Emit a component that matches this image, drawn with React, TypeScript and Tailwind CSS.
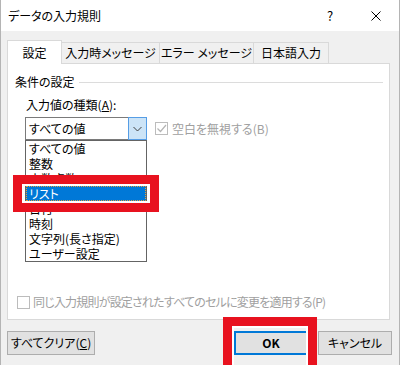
import React from 'react';

const listItems = [
  'すべての値',
  '整数',
  '小数点数',
  'リスト',
  '日付',
  '時刻',
  '文字列(長さ指定)',
  'ユーザー設定',
];

function Check({ checked }: { checked?: boolean }) {
  return (
    <span className="flex h-[13px] w-[13px] shrink-0 items-center justify-center border border-[#bcbcbc] bg-white">
      {checked && (
        <svg width="11" height="11" viewBox="0 0 11 11">
          <path d="M1.5 5.5l3 3 5.5-6.5" stroke="#b4b4b4" strokeWidth="1.2" fill="none" />
        </svg>
      )}
    </span>
  );
}

export default function App() {
  return (
    <div className="relative h-[365px] w-[400px] overflow-hidden border-x border-[#b4b4b4] bg-[#f0f0f0] font-['Noto_Sans_CJK_JP',sans-serif] text-[12px] leading-[14px] text-black [font-feature-settings:'palt']">
      {/* title bar */}
      <div className="flex h-[31px] items-center bg-white pl-[7px]">
        <span className="text-[12px]">データの入力規則</span>
        <div className="ml-auto flex h-full">
          <div className="flex w-[46px] items-center justify-center text-[13px]">?</div>
          <div className="flex w-[46px] items-center justify-center">
            <svg width="10" height="10" viewBox="0 0 10 10">
              <path d="M0.5 0.5l9 9M9.5 0.5l-9 9" stroke="#000" strokeWidth="1" fill="none" />
            </svg>
          </div>
        </div>
      </div>

      {/* tabs */}
      <div className="ml-[6px] mt-[9px] flex h-[23px] items-end">
        <div className="relative z-10 -mb-px flex h-[24px] w-[55px] items-center justify-center border-x border-t border-[#d9d9d9] bg-white">
          設定
        </div>
        <div className="flex h-[21px] w-[98px] items-center justify-center border-r border-t border-[#d9d9d9]">
          入力時メッセージ
        </div>
        <div className="flex h-[21px] w-[94px] items-center justify-center border-r border-t border-[#d9d9d9]">
          エラー メッセージ
        </div>
        <div className="flex h-[21px] w-[75px] items-center justify-center border-r border-t border-[#d9d9d9]">
          日本語入力
        </div>
      </div>

      {/* panel */}
      <div className="ml-[6px] flex h-[257px] w-[383px] flex-col border border-[#d9d9d9] bg-white">
        <div className="mt-[11px] flex h-[14px] items-center pl-[7px] pr-[6px]">
          <span>条件の設定</span>
          <div className="ml-[4px] h-px flex-1 bg-[#dcdcdc]" />
        </div>
        <div className="mt-[9px] pl-[18px]">
          入力値の種類(<span className="underline">A</span>):
        </div>
        <div className="mt-[5px] flex items-center gap-[8px] pl-[17px]">
          <div className="relative z-10 flex h-[23px] w-[122px] items-center border border-[#7a7a7a] bg-white">
            <span className="pl-[3px]">すべての値</span>
            <div className="absolute -right-px -top-px flex h-[23px] w-[19px] items-center justify-center border border-[#569de5] bg-[#cce4f7]">
              <svg width="9" height="6" viewBox="0 0 9 6">
                <path d="M0.5 1l4 4 4-4" stroke="#404040" strokeWidth="1" fill="none" />
              </svg>
            </div>
            <div className="absolute -left-px top-[22px] w-[122px] border border-[#646464] bg-white">
              {listItems.map((item) => (
                <div
                  key={item}
                  className={
                    item === 'リスト'
                      ? 'h-[15px] border border-dotted border-[#e8a13a] bg-[#0078d7] pl-[2px] leading-[13px] text-white'
                      : 'h-[15px] pl-[3px] leading-[15px]'
                  }
                >
                  {item}
                </div>
              ))}
            </div>
          </div>
          <div className="flex items-center gap-[4px] text-[#a0a0a0]">
            <Check checked />
            <span>空白を無視する(B)</span>
          </div>
        </div>

        <div className="mb-[10px] mt-auto flex items-center gap-[3px] pl-[9px] text-[#a0a0a0]">
          <Check />
          <span className="tracking-[-0.8px]">同じ入力規則が設定されたすべてのセルに変更を適用する(P)</span>
        </div>
      </div>

      {/* buttons */}
      <div className="mt-[11px] flex">
        <button className="ml-[6px] h-[24px] w-[88px] border border-[#adadad] bg-[#e1e1e1]">
          すべてクリア(<span className="underline">C</span>)
        </button>
        <button className="ml-auto h-[24px] w-[74px] border-2 border-[#0078d7] bg-[#e1e1e1] font-semibold">
          OK
        </button>
        <button className="ml-[10px] mr-[7px] h-[24px] w-[74px] border border-[#adadad] bg-[#e1e1e1]">
          キャンセル
        </button>
      </div>

      {/* red annotation frames */}
      <div className="absolute left-[12px] top-[175px] z-20 h-[37px] w-[146px] border-[9px] border-[#e8121f] shadow-[inset_0_0_0_2px_#ffffff]" />
      <div className="absolute left-[222px] top-[317px] z-20 h-[60px] w-[94px] border-[9px] border-[#e8121f] shadow-[inset_0_0_0_2px_#ffffff]" />
    </div>
  );
}
